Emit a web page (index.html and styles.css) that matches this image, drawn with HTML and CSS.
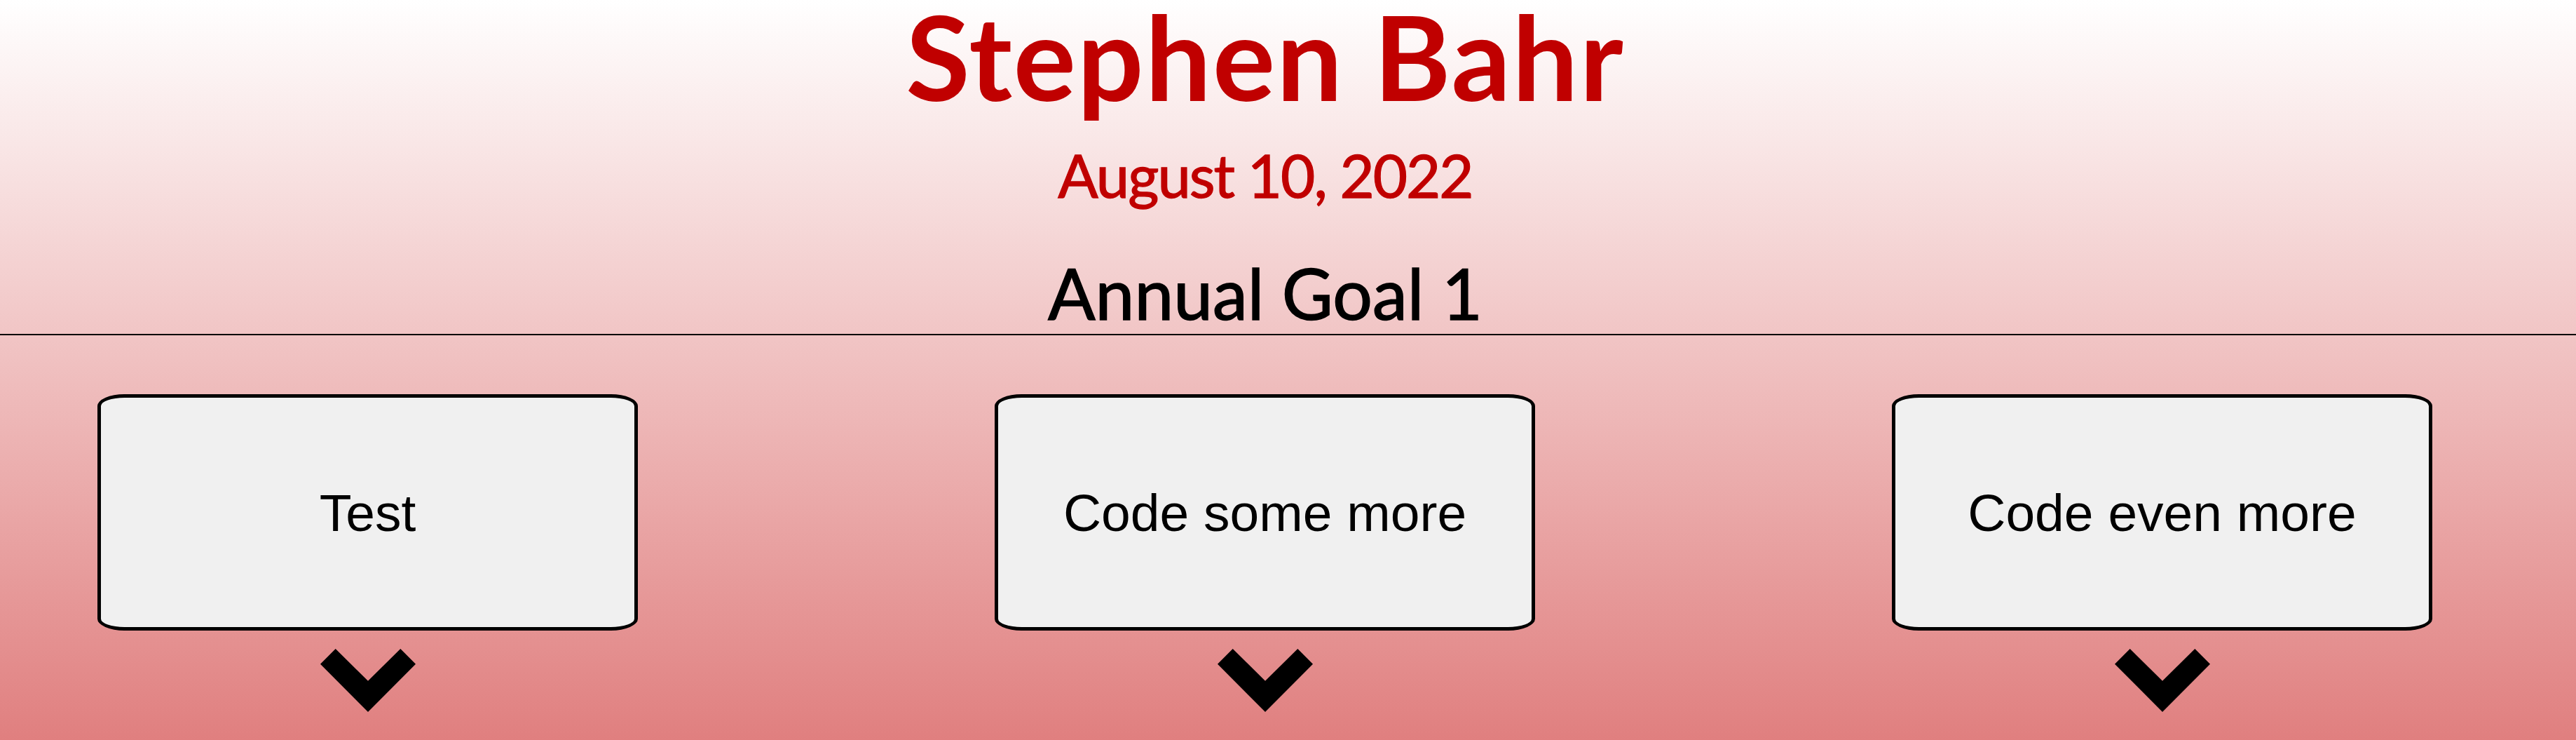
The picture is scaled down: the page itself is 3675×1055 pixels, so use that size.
FILE: index.html
```html
<!DOCTYPE html>
<html lang="en">
<head>
<meta charset="utf-8">
<title>Stephen Bahr</title>
<link rel="stylesheet" href="styles.css">
</head>
<body>
  <header class="head">
    <h1 class="name">Stephen Bahr</h1>
    <p class="date">August 10, 2022</p>
    <h2 class="goal">Annual Goal 1</h2>
  </header>
  <main class="steps">
    <div class="step">
      <div class="card">Test</div>
      <svg class="chev" viewBox="0 0 136 90" width="136" height="90"><polygon points="21.7,0 0,21.7 68,90 136,21.7 114.3,0 68,45.7"/></svg>
    </div>
    <div class="step">
      <div class="card">Code some more</div>
      <svg class="chev" viewBox="0 0 136 90" width="136" height="90"><polygon points="21.7,0 0,21.7 68,90 136,21.7 114.3,0 68,45.7"/></svg>
    </div>
    <div class="step">
      <div class="card">Code even more</div>
      <svg class="chev" viewBox="0 0 136 90" width="136" height="90"><polygon points="21.7,0 0,21.7 68,90 136,21.7 114.3,0 68,45.7"/></svg>
    </div>
  </main>
</body>
</html>
```
FILE: styles.css
```css
html, body {
  margin: 0;
  padding: 0;
}
body {
  width: 3675px;
  height: 1055px;
  overflow: hidden;
  background: linear-gradient(to bottom, #ffffff 0%, #e07f7f 100%);
  font-family: Lato, "Open Sans", sans-serif;
}
.head {
  padding: 0 65px 4px 0;
  text-align: center;
  border-bottom: 2px solid #000;
}
.name {
  margin: 0;
  font-size: 167px;
  line-height: 160px;
  font-weight: 700;
  letter-spacing: 2px;
  color: #c00000;
}
.date {
  margin: 0;
  font-size: 85px;
  line-height: 178px;
  font-weight: 400;
  letter-spacing: -2px;
  -webkit-text-stroke: 1.3px #c00000;
  color: #c00000;
}
.goal {
  margin: 24px 0 0;
  font-size: 100px;
  line-height: 110px;
  font-weight: 400;
  -webkit-text-stroke: 1.5px #000;
  color: #000;
}
.steps {
  display: flex;
  gap: 509px;
  padding: 84px 0 0 139px;
}
.step {
  width: 771px;
  display: flex;
  flex-direction: column;
  align-items: center;
}
.card {
  box-sizing: border-box;
  width: 771px;
  height: 337px;
  border: 5px solid #000;
  border-radius: 5%;
  background: #f0f0f0;
  display: flex;
  align-items: center;
  justify-content: center;
  font-family: "Liberation Sans", Arial, sans-serif;
  font-size: 75px;
  color: #000;
}
.chev {
  display: block;
  margin-top: 26px;
  fill: #000;
}
```
